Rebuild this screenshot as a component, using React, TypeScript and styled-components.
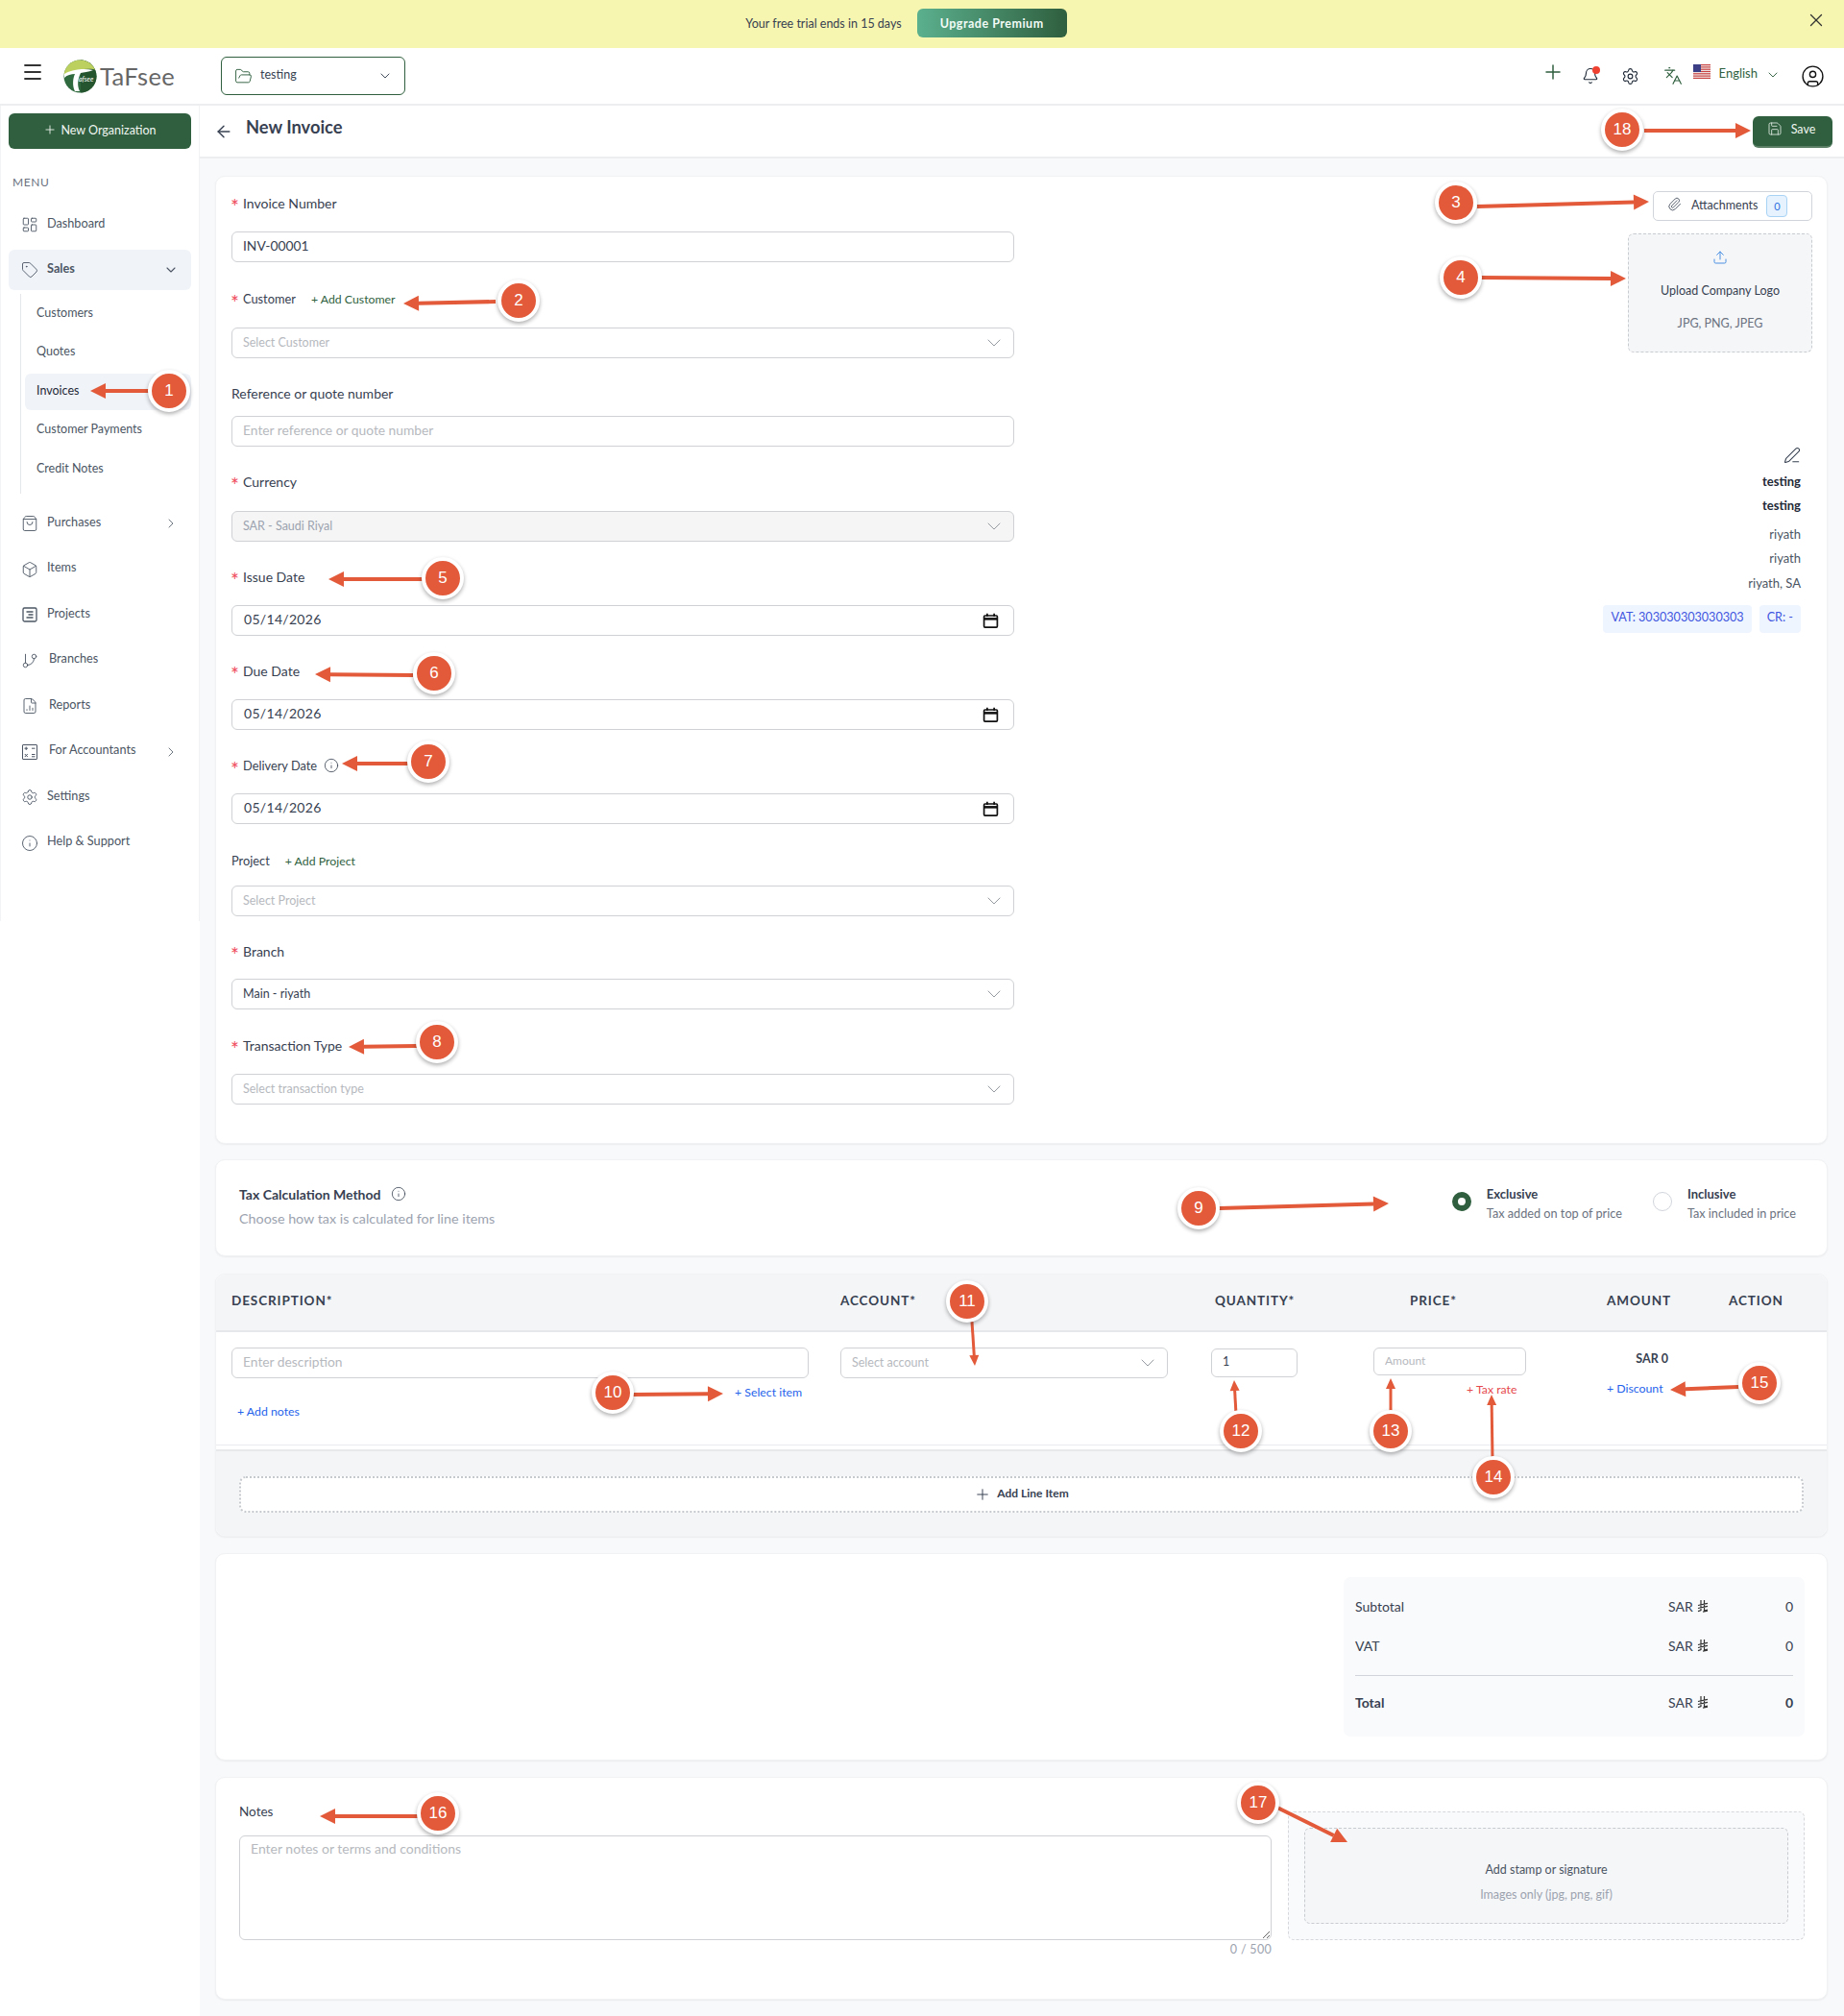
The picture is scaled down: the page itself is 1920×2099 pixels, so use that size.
import React from "react";
import styled, { createGlobalStyle } from "styled-components";
import {
  ArrowLeft, Bell, Box, ChevronDown, ChevronRight, CircleUser, FileChartColumn, FolderOpen, GitBranch, Info,
  Languages, LayoutDashboard, Menu, Paperclip, PenLine, Plus, Save, Settings, ShoppingBag, Tag, Upload, X,
} from "lucide-react";

const FONT = `"Lato", "Noto Sans", sans-serif`;
const GREEN = "#2f5f3e";
const RED = "#e25a3a";

const Global = createGlobalStyle`
  html, body { margin: 0; padding: 0; background: #fff; }
  body { font-family: ${FONT}; color: #374151; }
  * { box-sizing: border-box; }
  input, textarea { font-family: ${FONT}; }
`;

const Page = styled.div`
  position: relative;
  width: 1920px;
  height: 2099px;
  overflow: hidden;
  display: flex;
  flex-direction: column;
  background: #fff;
`;

/* Banner */
const Banner = styled.div`
  position: relative;
  height: 50px;
  flex: none;
  background: #f7f6b0;
  display: flex;
  align-items: center;
  justify-content: center;
  gap: 16px;
  padding-right: 33px;
  padding-bottom: 2px;
  font-size: 12.5px;
  color: #374151;
`;
const Upgrade = styled.button`
  width: 156px;
  height: 30px;
  border: 0;
  border-radius: 6px;
  background: linear-gradient(90deg, #5bb08e 0%, #2f5f3e 100%);
  color: #f2fbf6;
  font: 700 12.5px ${FONT};
  letter-spacing: 0.5px;
`;
const BannerClose = styled.span`
  position: absolute;
  right: 18px;
  top: 10px;
  display: flex;
  color: #333;
`;

/* Header */
const Header = styled.header`
  height: 60px;
  flex: none;
  display: flex;
  align-items: center;
  border-bottom: 2px solid #eceef0;
  padding-left: 22px;
`;
const Burger = styled.span`
  display: flex;
  margin-top: -8px;
  color: #333;
`;
const LogoWrap = styled.div`
  display: flex;
  align-items: center;
  margin-left: 20px;
  width: 141px;
`;
const LogoText = styled.span`
  font: 400 25.5px ${FONT};
  color: #666;
  margin-left: 3px;
  letter-spacing: 0.4px;
`;
const OrgSelect = styled.div`
  margin-left: 23px;
  width: 192px;
  height: 40px;
  border: 1px solid ${GREEN};
  border-radius: 6px;
  display: flex;
  align-items: center;
  padding: 0 12px 0 13px;
  font-size: 12.5px;
  color: #374151;
  span { margin-left: 8px; flex: 1; margin-top: -4px; }
`;
const HeaderTools = styled.div`
  margin-left: auto;
  display: flex;
  align-items: center;
  padding-right: 20px;
`;
const ToolIcon = styled.span<{ $ml: number; $up?: number; $color?: string }>`
  position: relative;
  display: flex;
  margin-left: ${(p) => p.$ml}px;
  margin-top: ${(p) => -(p.$up ?? 0)}px;
  color: ${(p) => p.$color ?? "#1f2937"};
`;
const Dot = styled.i`
  position: absolute;
  width: 8px;
  height: 8px;
  right: -1px;
  top: -1px;
  border-radius: 50%;
  background: #ef4130;
`;
const Lang = styled.span`
  margin-left: 9px;
  margin-top: -6px;
  font-size: 13px;
  color: ${GREEN};
`;

/* Body */
const Body = styled.div`
  flex: 1;
  display: grid;
  grid-template-columns: 208px 1fr;
  min-height: 0;
`;
const Side = styled.aside`
  align-self: start;
  height: 849px;
  padding: 8px 9px 0 9px;
  border-left: 1px solid #f3f4f6;
  border-right: 1px solid #f1f2f4;
`;
const NewOrg = styled.button`
  width: 190px;
  height: 37px;
  margin-left: -1px;
  border: 0;
  border-radius: 6px;
  background: ${GREEN};
  color: #f1f6f2;
  font: 400 12.5px ${FONT};
  display: flex;
  align-items: center;
  justify-content: center;
  gap: 4px;
  padding-bottom: 4px;
`;
const MenuLabel = styled.div`
  margin: 27px 0 15px 3px;
  height: 16px;
  line-height: 16px;
  font-size: 12px;
  letter-spacing: 0.6px;
  color: #6b7280;
`;
const NavList = styled.nav`
  display: flex;
  flex-direction: column;
  margin-left: -1px;
`;
const NavItem = styled.div<{ $open?: boolean; $mt?: number; $gap?: number }>`
  width: 190px;
  height: 42px;
  margin-top: ${(p) => p.$mt ?? 0}px;
  display: flex;
  align-items: center;
  padding: 0 13px;
  gap: ${(p) => p.$gap ?? 9}px;
  border-radius: 6px;
  font-size: 12.7px;
  color: #4b5563;
  font-weight: ${(p) => (p.$open ? 700 : 400)};
  background: ${(p) => (p.$open ? "#f0f3f8" : "transparent")};
  svg { flex: none; color: #4b5563; }
  span { flex: 1; margin-top: -5px; }
`;
const SubList = styled.div`
  margin: 4px 0 0 12px;
  padding: 0 0 8px 4px;
  border-left: 1px solid #e5e7eb;
  display: flex;
  flex-direction: column;
  gap: 2.5px;
`;
const SubItem = styled.div<{ $active?: boolean }>`
  height: 38px;
  width: 173px;
  display: flex;
  align-items: center;
  padding: 0 12px ${(p) => (p.$active ? 4 : 0)}px;
  margin-top: ${(p) => (p.$active ? 2 : 0)}px;
  margin-bottom: ${(p) => (p.$active ? -2 : 0)}px;
  border-radius: 6px;
  font-size: 12.5px;
  color: ${(p) => (p.$active ? "#1f2937" : "#4b5563")};
  background: ${(p) => (p.$active ? "#f0f3f8" : "transparent")};
`;

/* Main */
const Main = styled.main`
  background: #f8f9fb;
  display: flex;
  flex-direction: column;
  min-width: 0;
`;
const PageBar = styled.div`
  height: 55px;
  flex: none;
  background: #fff;
  border-bottom: 2px solid #eceef0;
  display: flex;
  align-items: center;
  padding: 0 12px 0 15px;
  svg { flex: none; }
`;
const Title = styled.h1`
  margin: -10px 0 0 13px;
  font: 700 18.3px ${FONT};
  color: #374151;
  flex: 1;
`;
const SaveBtn = styled.button`
  width: 83px;
  height: 33px;
  margin-top: 2px;
  border: 0;
  border-bottom: 2px solid #5a7f65;
  border-radius: 6px;
  background: ${GREEN};
  color: #eef5f0;
  font: 400 12.5px ${FONT};
  display: flex;
  align-items: center;
  justify-content: center;
  gap: 9px;
  padding: 0 3px 4px 0;
  svg { margin-top: -2px; }
`;
const Content = styled.div`
  flex: 1;
  padding: 18px 17px 0 16px;
  display: flex;
  flex-direction: column;
`;
const Card = styled.section<{ $mt?: number }>`
  background: #fff;
  border: 1px solid #f1f2f4;
  border-radius: 10px;
  box-shadow: 0 1px 2px rgba(0, 0, 0, 0.06);
  margin-top: ${(p) => p.$mt ?? 0}px;
`;
const InfoCard = styled(Card)`
  display: flex;
  justify-content: space-between;
  padding: 15px 15px 40px 16px;
`;
const FormCol = styled.div`
  width: 815px;
`;
const Field = styled.div<{ $mt?: number }>`
  margin-top: ${(p) => p.$mt ?? 0}px;
`;
const Label = styled.div<{ $mb: number; $small?: boolean }>`
  height: 20px;
  display: flex;
  align-items: center;
  margin-bottom: ${(p) => p.$mb}px;
  font-size: ${(p) => (p.$small ? 12.8 : 14)}px;
  color: #374151;
`;
const Star = styled.span`
  color: #ef4d5c;
  margin-right: 4px;
  font-size: 21px;
  line-height: 1;
  width: 8px;
  transform: translate(-1px, 3px);
`;
const AddLink = styled.span<{ $c?: string }>`
  margin-left: 16px;
  font-size: 12.3px;
  color: ${(p) => p.$c ?? GREEN};
`;
const InfoIcon = styled.span<{ $ml?: number }>`
  display: flex;
  margin-left: ${(p) => p.$ml ?? 7}px;
  color: #374151;
`;
const TextInput = styled.input<{ $w?: number }>`
  width: ${(p) => (p.$w ? `${p.$w}px` : "100%")};
  height: 32px;
  border: 1px solid #cfd1d4;
  border-radius: 6px;
  padding: 0 11px 3px;
  background: #fff;
  font-size: 13.8px;
  color: #374151;
  outline: none;
  &::placeholder { color: #b6b9be; }
`;
const DateBox = styled.div`
  height: 32px;
  border: 1px solid #cfd1d4;
  border-radius: 6px;
  padding: 0 15px 3px 12px;
  display: flex;
  align-items: center;
  justify-content: space-between;
  font-size: 14px;
  letter-spacing: 0.3px;
  color: #374151;
  svg { margin-top: 3px; }
`;
const SelectBox = styled.div<{ $disabled?: boolean; $value?: boolean }>`
  height: 32px;
  border: 1px solid #cfd1d4;
  border-radius: 6px;
  padding: 0 8px 2px 11px;
  display: flex;
  align-items: center;
  justify-content: space-between;
  font-size: 12.5px;
  background: ${(p) => (p.$disabled ? "#f5f5f5" : "#fff")};
  color: ${(p) => (p.$disabled ? "#9ca3af" : p.$value ? "#374151" : "#b6b9be")};
  svg { color: #8a8f96; flex: none; margin-top: 2px; }
`;

/* Right column of the first card */
const CompanyCol = styled.div`
  display: flex;
  flex-direction: column;
  align-items: flex-end;
`;
const AttachBtn = styled.div`
  width: 166px;
  height: 31px;
  border: 1px solid #d1d5db;
  border-radius: 5px;
  display: flex;
  align-items: center;
  padding: 0 0 0 14px;
  font-size: 12.5px;
  color: #374151;
  svg { flex: none; margin-top: -4px; }
  span { margin: -2px 9px 0 10px; }
`;
const CountChip = styled.i`
  width: 22px;
  height: 23px;
  border: 1px solid #a9d3f5;
  border-radius: 4px;
  background: #e6f3fe;
  font: 400 11px ${FONT};
  color: #2f6fe0;
  display: flex;
  align-items: center;
  justify-content: center;
`;
const UploadBox = styled.div`
  margin-top: 13px;
  width: 192px;
  height: 124px;
  border: 1px dashed #c8cbd0;
  border-radius: 6px;
  background: #f5f6f8;
  display: flex;
  flex-direction: column;
  align-items: center;
  padding-top: 16px;
  color: #4a90e2;
`;
const UploadTitle = styled.div`
  margin-top: 19px;
  font-size: 12.5px;
  color: #374151;
`;
const UploadSub = styled.div`
  margin-top: 19px;
  font-size: 12.5px;
  color: #6b7280;
`;
const Company = styled.div`
  width: 100%;
  padding-right: 12px;
  margin-top: 98px;
  display: flex;
  flex-direction: column;
  align-items: flex-end;
  font-size: 13px;
  color: #4b5563;
`;
const CompanyLine = styled.div<{ $bold?: boolean; $mt?: number }>`
  height: 25px;
  line-height: 25px;
  margin-top: ${(p) => p.$mt ?? 0}px;
  font-weight: ${(p) => (p.$bold ? 700 : 400)};
  color: ${(p) => (p.$bold ? "#1f2937" : "#4b5563")};
`;
const TagRow = styled.div`
  display: flex;
  gap: 8px;
  margin-top: 10px;
`;
const IdTag = styled.span`
  height: 29px;
  padding: 5px 8px 0;
  border-radius: 4px;
  background: #eff5ff;
  color: #3f56e0;
  font-size: 12.6px;
`;

/* Tax */
const TaxCard = styled(Card)`
  height: 101px;
  display: flex;
  justify-content: space-between;
  padding: 25px 32px 0 24px;
`;
const TaxTitle = styled.div`
  height: 20px;
  display: flex;
  align-items: center;
  font-size: 14px;
  font-weight: 700;
  color: #374151;
`;
const TaxSub = styled.div`
  margin-top: 6px;
  height: 20px;
  line-height: 20px;
  font-size: 14.3px;
  color: #9ca3af;
`;
const RadioGroup = styled.div`
  display: flex;
  gap: 32px;
`;
const RadioOpt = styled.div`
  display: flex;
  gap: 16px;
`;
const Radio = styled.i<{ $on?: boolean }>`
  width: 20px;
  height: 20px;
  margin-top: 8px;
  border-radius: 50%;
  background: #fff;
  border: ${(p) => (p.$on ? `6px solid ${GREEN}` : "1px solid #d1d5db")};
`;
const RadioTitle = styled.div`
  height: 20px;
  line-height: 20px;
  font-size: 13px;
  font-weight: 700;
  color: #374151;
`;
const RadioSub = styled.div`
  height: 20px;
  line-height: 20px;
  font-size: 12.7px;
  color: #6b7280;
`;

/* Lines table */
const TableCard = styled(Card)`
  overflow: hidden;
`;
const COLS = "634px 386px 169px 243px 127px 1fr";
const TableHead = styled.div`
  height: 60px;
  background: #f4f5f7;
  border-bottom: 2px solid #e5e7eb;
  display: grid;
  grid-template-columns: ${COLS};
  align-items: center;
  padding: 0 0 4px 16px;
`;
const HeadCell = styled.div<{ $pl?: number }>`
  padding-left: ${(p) => p.$pl ?? 0}px;
  font-size: 13.5px;
  font-weight: 700;
  letter-spacing: 0.9px;
  color: #374151;
  white-space: nowrap;
`;
const LineRow = styled.div`
  height: 118px;
  border-bottom: 1px solid #e9ebee;
  display: grid;
  grid-template-columns: ${COLS};
  padding: 16px 0 0 16px;
`;
const CellCol = styled.div`
  display: flex;
  flex-direction: column;
  align-items: flex-start;
`;
const SmallLink = styled.span<{ $c?: string; $mt?: number; $ml?: number }>`
  height: 18px;
  line-height: 18px;
  margin-top: ${(p) => p.$mt ?? 0}px;
  margin-left: ${(p) => p.$ml ?? 0}px;
  font-size: 12.3px;
  white-space: nowrap;
  color: ${(p) => p.$c ?? "#2563eb"};
`;
const QtyInput = styled(TextInput)`
  margin-top: 1px;
  height: 30px;
  width: 90px;
  font-size: 12.5px;
`;
const PriceInput = styled(TextInput)`
  height: 29px;
  width: 159px;
  font-size: 12px;
`;
const SelectWrap = styled.div`
  width: 341px;
`;
const AmountVal = styled.div`
  width: 64px;
  height: 24px;
  line-height: 24px;
  text-align: right;
  font-size: 12.5px;
  font-weight: 700;
  color: #374151;
`;
const TableFoot = styled.div`
  margin-top: 4px;
  height: 90px;
  background: #f4f5f7;
  border-top: 2px solid #e8e9eb;
  padding: 26px 24px 0;
`;
const AddLine = styled.div`
  height: 38px;
  border: 2px dotted #c6c9ce;
  border-radius: 7px;
  background: #fff;
  display: flex;
  align-items: center;
  justify-content: center;
  gap: 6px;
  font-size: 12px;
  font-weight: 700;
  color: #374151;
  span { margin-top: -3px; }
`;

/* Totals */
const TotalsCard = styled(Card)`
  height: 216px;
  display: flex;
  justify-content: flex-end;
  padding: 24px 23px 0 0;
`;
const TotalsBox = styled.div`
  width: 480px;
  height: 166px;
  background: #f9fafb;
  border-radius: 7px;
  padding: 20px 12px 0;
`;
const TotalRow = styled.div<{ $strong?: boolean; $mt?: number }>`
  margin-top: ${(p) => p.$mt ?? 0}px;
  height: 20px;
  display: grid;
  grid-template-columns: 326px 1fr auto;
  align-items: center;
  font-size: 14px;
  color: #374151;
  font-weight: 400;
  b { font-weight: ${(p) => (p.$strong ? 700 : 400)}; }
`;
const Sar = styled.span`
  display: flex;
  align-items: center;
  gap: 4px;
`;
const TotalRule = styled.hr`
  margin: 21px 0 17px;
  border: 0;
  border-top: 1px solid #d1d5db;
`;

/* Notes */
const NotesCard = styled(Card)`
  height: 232px;
  display: grid;
  grid-template-columns: 1075px 538px;
  column-gap: 17px;
  padding: 25px 0 0 24px;
`;
const NotesLabel = styled.div`
  height: 20px;
  line-height: 20px;
  margin-bottom: 15px;
  font-size: 13.5px;
  color: #374151;
`;
const NotesArea = styled.textarea`
  display: block;
  width: 100%;
  height: 109px;
  border: 1px solid #cfd1d4;
  border-radius: 6px;
  padding: 4px 11px;
  font-size: 14px;
  resize: vertical;
  outline: none;
  &::placeholder { color: #b6b9be; }
`;
const Counter = styled.div`
  margin-top: 1px;
  height: 18px;
  line-height: 18px;
  text-align: right;
  font-size: 12.5px;
  letter-spacing: 0.3px;
  color: #9ca3af;
`;
const StampOuter = styled.div`
  margin-top: 10px;
  height: 134px;
  border: 1px dashed #d5d7db;
  border-radius: 6px;
  background: #f9fafb;
  padding: 16px;
`;
const StampInner = styled.div`
  height: 100px;
  border: 1px dashed #c8cbd0;
  border-radius: 6px;
  background: #f5f6f8;
  display: flex;
  flex-direction: column;
  align-items: center;
  padding-top: 34px;
`;
const StampTitle = styled.div`
  font-size: 12.5px;
  line-height: 18px;
  color: #4b5563;
`;
const StampSub = styled.div`
  margin-top: 8px;
  font-size: 12.5px;
  line-height: 18px;
  color: #9ca3af;
`;

/* Annotation overlay */
const ArrowLayer = styled.svg`
  position: absolute;
  left: 0;
  top: 0;
  pointer-events: none;
`;
const Badge = styled.div.attrs<{ $x: number; $y: number }>((p) => ({
  style: { left: p.$x - 22, top: p.$y - 22 },
}))<{ $x: number; $y: number }>`
  position: absolute;
  width: 44px;
  height: 44px;
  border-radius: 50%;
  background: ${RED};
  border: 4px solid #fff;
  box-shadow: 0 2px 4px rgba(0, 0, 0, 0.32);
  color: #fff;
  font: 400 17px "Liberation Sans", Arial, sans-serif;
  display: flex;
  align-items: center;
  justify-content: center;
`;

type Mark = { n: number; x: number; y: number; from: [number, number]; to: [number, number] };
const MARKS: Mark[] = [
  { n: 1, x: 176, y: 407, from: [155, 407], to: [94, 407] },
  { n: 2, x: 540, y: 313, from: [516, 314], to: [420, 316] },
  { n: 3, x: 1516, y: 211, from: [1538, 215], to: [1717, 210] },
  { n: 4, x: 1521, y: 289, from: [1542, 289], to: [1693, 290] },
  { n: 5, x: 461, y: 602, from: [440, 603], to: [342, 603] },
  { n: 6, x: 452, y: 701, from: [430, 703], to: [328, 702] },
  { n: 7, x: 446, y: 793, from: [425, 795], to: [356, 795] },
  { n: 8, x: 455, y: 1085, from: [434, 1089], to: [363, 1090] },
  { n: 9, x: 1248, y: 1258, from: [1268, 1258], to: [1446, 1253] },
  { n: 10, x: 638, y: 1450, from: [658, 1452], to: [753, 1451] },
  { n: 11, x: 1007, y: 1355, from: [1012, 1376], to: [1015, 1422] },
  { n: 12, x: 1292, y: 1490, from: [1287, 1472], to: [1285, 1437] },
  { n: 13, x: 1448, y: 1490, from: [1448, 1470], to: [1448, 1435] },
  { n: 14, x: 1555, y: 1538, from: [1554, 1519], to: [1553, 1452] },
  { n: 15, x: 1832, y: 1440, from: [1810, 1444], to: [1739, 1447] },
  { n: 16, x: 456, y: 1888, from: [435, 1891], to: [333, 1891] },
  { n: 17, x: 1310, y: 1877, from: [1328, 1881], to: [1403, 1918] },
  { n: 18, x: 1689, y: 135, from: [1712, 136], to: [1823, 136] },
];

const Arrow = ({ from, to, n }: { from: [number, number]; to: [number, number]; n: number }) => {
  const dx = to[0] - from[0];
  const dy = to[1] - from[1];
  const len = Math.hypot(dx, dy);
  const ux = dx / len;
  const uy = dy / len;
  const small = n >= 11 && n <= 14;
  const headL = small ? 11 : 16;
  const headW = small ? 5 : 8;
  const bx = to[0] - ux * headL;
  const by = to[1] - uy * headL;
  const pts = [
    [to[0], to[1]],
    [bx - uy * headW, by + ux * headW],
    [bx + uy * headW, by - ux * headW],
  ]
    .map((p) => p.join(","))
    .join(" ");
  return (
    <g>
      <line x1={from[0]} y1={from[1]} x2={bx} y2={by} stroke={RED} strokeWidth={small ? 3 : 4} />
      <polygon points={pts} fill={RED} />
    </g>
  );
};

const LogoMark = () => (
  <svg width="35" height="35" viewBox="0 0 35 35">
    <defs>
      <clipPath id="logo-clip"><circle cx="17.5" cy="17.5" r="17" /></clipPath>
    </defs>
    <g clipPath="url(#logo-clip)">
      <rect width="35" height="35" fill="#2f6a3e" />
      <rect x="18" width="17" height="35" fill="#25552f" />
      <path d="M0 0H35V11C26 8 14 11 4 14L0 16Z" fill="#bcd05f" />
      <path d="M1 15C9 10 22 9 31 11C26 13 21 13 18 14C15 20 14 27 17 33L12 33C9 27 10 19 12 15C8 15 4 16 1 19Z" fill="#fff" />
    </g>
    <text x="16" y="23" fontFamily="Lato, sans-serif" fontStyle="italic" fontSize="7" fill="#fff">afsee</text>
  </svg>
);

const Flag = () => (
  <svg width="18" height="15" viewBox="0 0 18 15">
    <rect width="18" height="15" fill="#f3f3f3" />
    {[0, 2.3, 4.6, 6.9, 9.2, 11.5, 13.8].map((y) => (
      <rect key={y} y={y} width="18" height="1.2" fill="#c8403f" />
    ))}
    <rect width="8" height="8" fill="#3c3f86" />
  </svg>
);

const ProjectsIcon = () => (
  <svg width="18" height="18" viewBox="0 0 18 18" fill="none" stroke="currentColor" strokeWidth="1.3">
    <rect x="2" y="2" width="14" height="14" rx="1.5" />
    <path d="M5.5 6h7M7.5 9h5M5.5 12h7" />
  </svg>
);
const AccountantIcon = () => (
  <svg width="18" height="18" viewBox="0 0 18 18" fill="none" stroke="currentColor" strokeWidth="1">
    <rect x="1.5" y="1.5" width="15" height="15" rx="0.5" />
    <path d="M3.5 5.2h3.5M5.2 3.5v3.5M11 5.2h3.5M3.8 11l3 3M6.8 11l-3 3M11 11.5h3.5M11 13.8h3.5" />
  </svg>
);
const CalendarIcon = () => (
  <svg width="17" height="17" viewBox="0 0 16 16" fill="none" stroke="#111" strokeWidth="1.6">
    <rect x="1.5" y="2.8" width="13" height="11.4" rx="1" />
    <path d="M1.5 6h13" strokeWidth="2.4" />
    <path d="M4.6 0.8v3M11.4 0.8v3" />
  </svg>
);
const RiyalIcon = () => (
  <svg width="12" height="14" viewBox="0 0 12 14" fill="none" stroke="#333" strokeWidth="1.2">
    <path d="M4 1v10.5L1 12.6M7.5 1v11L11 11M1 6.5L11 4.3M1 9.5L11 7.3M6 13.2L11 12.2" />
  </svg>
);

const FieldSelect = ({ text, value, disabled }: { text: string; value?: boolean; disabled?: boolean }) => (
  <SelectBox $value={value} $disabled={disabled}>
    {text}
    <ChevronDown size={24} strokeWidth={0.9} />
  </SelectBox>
);

const DateField = () => (
  <DateBox>
    05/14/2026
    <CalendarIcon />
  </DateBox>
);

export default function App() {
  return (
    <Page>
      <Global />
      <Banner>
        Your free trial ends in 15 days
        <Upgrade>Upgrade Premium</Upgrade>
        <BannerClose><X size={22} strokeWidth={1.4} /></BannerClose>
      </Banner>

      <Header>
        <Burger><Menu size={24} strokeWidth={1.8} /></Burger>
        <LogoWrap>
          <LogoMark />
          <LogoText>TaFsee</LogoText>
        </LogoWrap>
        <OrgSelect>
          <FolderOpen size={19} strokeWidth={1.2} color={GREEN} />
          <span>testing</span>
          <ChevronDown size={16} strokeWidth={1.4} />
        </OrgSelect>
        <HeaderTools>
          <ToolIcon $up={8} $ml={0} $color={GREEN}><Plus size={24} strokeWidth={1.5} /></ToolIcon>
          <ToolIcon $ml={18} $up={0}>
            <Bell size={18} strokeWidth={1.5} />
            <Dot />
          </ToolIcon>
          <ToolIcon $ml={23} $up={0}><Settings size={19} strokeWidth={1.4} /></ToolIcon>
          <ToolIcon $ml={25} $up={0} $color={GREEN}><Languages size={20} strokeWidth={1.4} /></ToolIcon>
          <ToolIcon $ml={11} $up={9}><Flag /></ToolIcon>
          <Lang>English</Lang>
          <ToolIcon $ml={8} $up={2} $color={GREEN}><ChevronDown size={16} strokeWidth={1.4} /></ToolIcon>
          <ToolIcon $ml={21} $up={0} $color="#111"><CircleUser size={25} strokeWidth={1.3} /></ToolIcon>
        </HeaderTools>
      </Header>

      <Body>
        <Side>
          <NewOrg><Plus size={14} strokeWidth={1.5} /> New Organization</NewOrg>
          <MenuLabel>MENU</MenuLabel>
          <NavList>
            <NavItem><LayoutDashboard size={18} strokeWidth={1.2} /><span>Dashboard</span></NavItem>
            <NavItem $open $mt={5}>
              <Tag size={18} strokeWidth={1.2} /><span>Sales</span><ChevronDown size={16} strokeWidth={1.6} />
            </NavItem>
            <SubList>
              <SubItem>Customers</SubItem>
              <SubItem>Quotes</SubItem>
              <SubItem $active>Invoices</SubItem>
              <SubItem>Customer Payments</SubItem>
              <SubItem>Credit Notes</SubItem>
            </SubList>
            <NavItem $mt={10}><ShoppingBag size={18} strokeWidth={1.2} /><span>Purchases</span><ChevronRight size={16} strokeWidth={1.2} /></NavItem>
            <NavItem $mt={5.5}><Box size={18} strokeWidth={1.2} /><span>Items</span></NavItem>
            <NavItem $mt={5.5}><ProjectsIcon /><span>Projects</span></NavItem>
            <NavItem $mt={5.5} $gap={11}><GitBranch size={18} strokeWidth={1.2} /><span>Branches</span></NavItem>
            <NavItem $mt={5.5} $gap={11}><FileChartColumn size={18} strokeWidth={1.2} /><span>Reports</span></NavItem>
            <NavItem $mt={5.5} $gap={11}><AccountantIcon /><span>For Accountants</span><ChevronRight size={16} strokeWidth={1.2} /></NavItem>
            <NavItem $mt={5.5}><Settings size={18} strokeWidth={1.2} /><span>Settings</span></NavItem>
            <NavItem $mt={5.5}><Info size={18} strokeWidth={1.2} /><span>Help & Support</span></NavItem>
          </NavList>
        </Side>

        <Main>
          <PageBar>
            <ArrowLeft size={20} strokeWidth={1.7} color="#374151" />
            <Title>New Invoice</Title>
            <SaveBtn><Save size={16} strokeWidth={1.2} />Save</SaveBtn>
          </PageBar>

          <Content>
            <InfoCard>
              <FormCol>
                <Field $mt={2}>
                  <Label $mb={20}><Star>*</Star>Invoice Number</Label>
                  <TextInput readOnly value="INV-00001" />
                </Field>
                <Field $mt={28}>
                  <Label $mb={20} $small><Star>*</Star>Customer<AddLink>+ Add Customer</AddLink></Label>
                  <FieldSelect text="Select Customer" />
                </Field>
                <Field $mt={26}>
                  <Label $mb={14}>Reference or quote number</Label>
                  <TextInput placeholder="Enter reference or quote number" />
                </Field>
                <Field $mt={26}>
                  <Label $mb={21}><Star>*</Star>Currency</Label>
                  <FieldSelect text="SAR - Saudi Riyal" disabled />
                </Field>
                <Field $mt={26}>
                  <Label $mb={20}><Star>*</Star>Issue Date</Label>
                  <DateField />
                </Field>
                <Field $mt={26}>
                  <Label $mb={20}><Star>*</Star>Due Date</Label>
                  <DateField />
                </Field>
                <Field $mt={27}>
                  <Label $mb={19} $small>
                    <Star>*</Star>Delivery Date
                    <InfoIcon><Info size={16} strokeWidth={1.2} /></InfoIcon>
                  </Label>
                  <DateField />
                </Field>
                <Field $mt={28}>
                  <Label $mb={16} $small>Project<AddLink>+ Add Project</AddLink></Label>
                  <FieldSelect text="Select Project" />
                </Field>
                <Field $mt={26}>
                  <Label $mb={19}><Star>*</Star>Branch</Label>
                  <FieldSelect text="Main - riyath" value />
                </Field>
                <Field $mt={27}>
                  <Label $mb={20}><Star>*</Star>Transaction Type</Label>
                  <FieldSelect text="Select transaction type" />
                </Field>
              </FormCol>

              <CompanyCol>
                <AttachBtn>
                  <Paperclip size={15} strokeWidth={1.3} />
                  <span>Attachments</span>
                  <CountChip>0</CountChip>
                </AttachBtn>
                <UploadBox>
                  <Upload size={16} strokeWidth={1.5} />
                  <UploadTitle>Upload Company Logo</UploadTitle>
                  <UploadSub>JPG, PNG, JPEG</UploadSub>
                </UploadBox>
                <Company>
                  <PenLine size={18} strokeWidth={1.4} color="#374151" />
                  <CompanyLine $bold $mt={6}>testing</CompanyLine>
                  <CompanyLine $bold>testing</CompanyLine>
                  <CompanyLine $mt={5}>riyath</CompanyLine>
                  <CompanyLine>riyath</CompanyLine>
                  <CompanyLine $mt={1}>riyath, SA</CompanyLine>
                  <TagRow>
                    <IdTag>VAT: 303030303030303</IdTag>
                    <IdTag>CR: -</IdTag>
                  </TagRow>
                </Company>
              </CompanyCol>
            </InfoCard>

            <TaxCard $mt={16}>
              <div>
                <TaxTitle>
                  Tax Calculation Method
                  <InfoIcon $ml={10}><Info size={16} strokeWidth={1.2} /></InfoIcon>
                </TaxTitle>
                <TaxSub>Choose how tax is calculated for line items</TaxSub>
              </div>
              <RadioGroup>
                <RadioOpt>
                  <Radio $on />
                  <div>
                    <RadioTitle>Exclusive</RadioTitle>
                    <RadioSub>Tax added on top of price</RadioSub>
                  </div>
                </RadioOpt>
                <RadioOpt>
                  <Radio />
                  <div>
                    <RadioTitle>Inclusive</RadioTitle>
                    <RadioSub>Tax included in price</RadioSub>
                  </div>
                </RadioOpt>
              </RadioGroup>
            </TaxCard>

            <TableCard $mt={18}>
              <TableHead>
                <HeadCell>DESCRIPTION*</HeadCell>
                <HeadCell>ACCOUNT*</HeadCell>
                <HeadCell $pl={4}>QUANTITY*</HeadCell>
                <HeadCell $pl={38}>PRICE*</HeadCell>
                <HeadCell>AMOUNT</HeadCell>
                <HeadCell>ACTION</HeadCell>
              </TableHead>
              <LineRow>
                <CellCol>
                  <TextInput $w={601} placeholder="Enter description" />
                  <SmallLink $mt={6} $ml={524}>+ Select item</SmallLink>
                  <SmallLink $mt={2} $ml={6}>+ Add notes</SmallLink>
                </CellCol>
                <SelectWrap><FieldSelect text="Select account" /></SelectWrap>
                <CellCol><QtyInput readOnly value="1" /></CellCol>
                <CellCol>
                  <PriceInput placeholder="Amount" />
                  <SmallLink $c="#e5484d" $mt={6} $ml={97}>+ Tax rate</SmallLink>
                </CellCol>
                <CellCol>
                  <AmountVal>SAR 0</AmountVal>
                  <SmallLink $mt={10}>+ Discount</SmallLink>
                </CellCol>
              </LineRow>
              <TableFoot>
                <AddLine>
                  <Plus size={18} strokeWidth={1.3} />
                  <span>Add Line Item</span>
                </AddLine>
              </TableFoot>
            </TableCard>

            <TotalsCard $mt={17}>
              <TotalsBox>
                <TotalRow>
                  <span>Subtotal</span><Sar>SAR <RiyalIcon /></Sar><b>0</b>
                </TotalRow>
                <TotalRow $mt={21}>
                  <span>VAT</span><Sar>SAR <RiyalIcon /></Sar><b>0</b>
                </TotalRow>
                <TotalRule />
                <TotalRow $strong>
                  <b>Total</b><Sar>SAR <RiyalIcon /></Sar><b>0</b>
                </TotalRow>
              </TotalsBox>
            </TotalsCard>

            <NotesCard $mt={17}>
              <div>
                <NotesLabel>Notes</NotesLabel>
                <NotesArea placeholder="Enter notes or terms and conditions" />
                <Counter>0 / 500</Counter>
              </div>
              <StampOuter>
                <StampInner>
                  <StampTitle>Add stamp or signature</StampTitle>
                  <StampSub>Images only (jpg, png, gif)</StampSub>
                </StampInner>
              </StampOuter>
            </NotesCard>
          </Content>
        </Main>
      </Body>

      <ArrowLayer width="1920" height="2099" viewBox="0 0 1920 2099">
        {MARKS.map((m) => (
          <Arrow key={m.n} n={m.n} from={m.from} to={m.to} />
        ))}
      </ArrowLayer>
      {MARKS.map((m) => (
        <Badge key={m.n} $x={m.x} $y={m.y}>{m.n}</Badge>
      ))}
    </Page>
  );
}
